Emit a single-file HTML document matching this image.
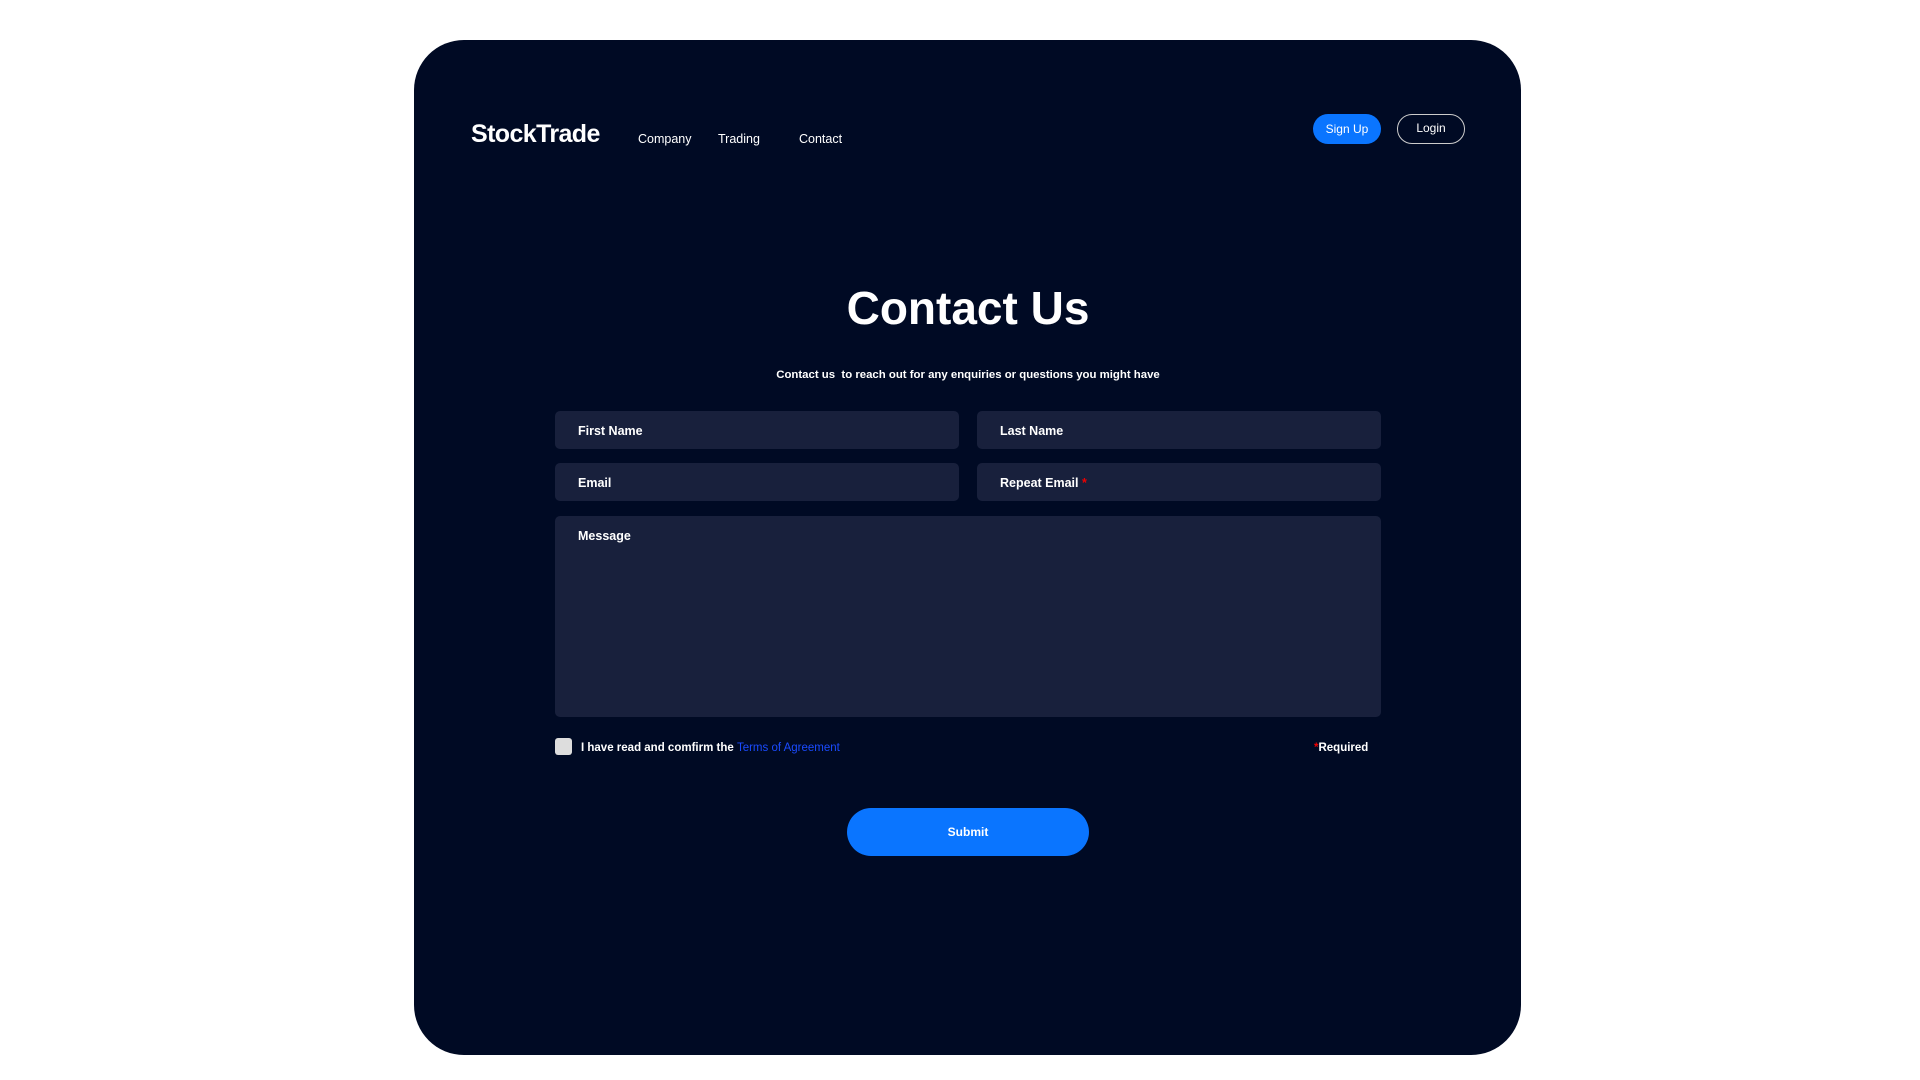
<!DOCTYPE html>
<html><head><meta charset="utf-8"><style>
*{margin:0;padding:0;box-sizing:border-box}
body{width:1920px;height:1080px;background:#fff;font-family:"Liberation Sans",sans-serif;position:relative;overflow:hidden;color:#fff}
.card{position:absolute;left:414px;top:40px;width:1107px;height:1015px;background:#000a24;border-radius:50px}
.a{position:absolute;white-space:nowrap}
.f{position:absolute;background:#18203c;border-radius:5px;font-size:12.5px;font-weight:bold;padding-left:23px;padding-top:13px}
</style></head><body>
<div class="card"></div>
<div class="a" style="left:471px;top:120px;font-size:25px;font-weight:bold;letter-spacing:-0.6px">StockTrade</div>
<div class="a" style="left:638px;top:132px;font-size:12.5px">Company</div>
<div class="a" style="left:718px;top:132px;font-size:12.5px">Trading</div>
<div class="a" style="left:799px;top:132px;font-size:12.5px">Contact</div>
<div class="a" style="left:1313px;top:114px;width:68px;height:30px;background:#0a75ff;border-radius:15px;font-size:12px;text-align:center;line-height:30px">Sign Up</div>
<div class="a" style="left:1397px;top:114px;width:68px;height:30px;border:1.5px solid #ccc;border-radius:15px;font-size:12px;text-align:center;line-height:27px">Login</div>
<div class="a" style="left:0;width:1936px;text-align:center;top:281px;font-size:46px;font-weight:bold">Contact Us</div>
<div class="a" style="left:0;width:1936px;text-align:center;top:369px;font-size:11.4px;font-weight:bold">Contact us&nbsp; to reach out for any enquiries or questions you might have</div>
<div class="f" style="left:555px;top:411px;width:404px;height:38px">First Name</div>
<div class="f" style="left:977px;top:411px;width:404px;height:38px">Last Name</div>
<div class="f" style="left:555px;top:463px;width:404px;height:38px">Email</div>
<div class="f" style="left:977px;top:463px;width:404px;height:38px">Repeat Email <span style="color:#e00">*</span></div>
<div class="f" style="left:555px;top:516px;width:826px;height:201px">Message</div>
<div class="a" style="left:555px;top:738px;width:17px;height:17px;background:#ddd;border-radius:3px"></div>
<div class="a" style="left:581px;top:742px;font-size:11.5px;font-weight:bold">I have read and comfirm the <span style="color:#1a4bff;font-weight:normal">Terms of Agreement</span></div>
<div class="a" style="left:1314px;top:742px;font-size:11.5px;font-weight:bold"><span style="color:#e00">*</span>Required</div>
<div class="a" style="left:847px;top:808px;width:242px;height:48px;background:#0a75ff;border-radius:24px;font-size:12px;font-weight:bold;text-align:center;line-height:48px">Submit</div>
</body></html>
